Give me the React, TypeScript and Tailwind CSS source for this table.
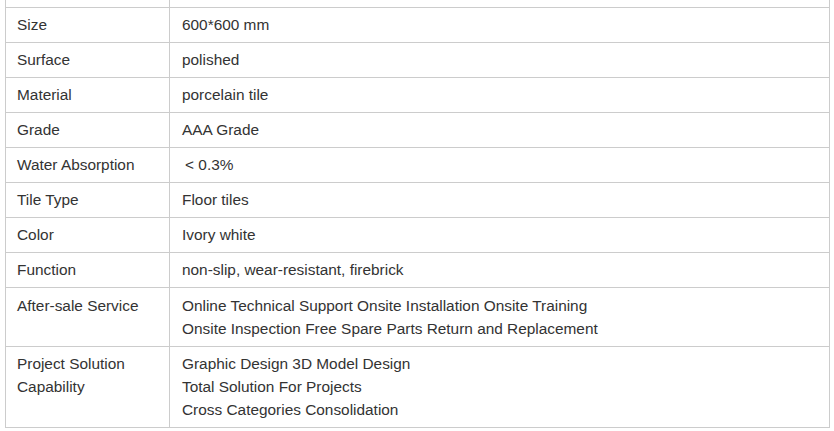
const one = "pt-[5px] pb-[6px]";

const rows: { label: string[]; value: string[]; pad: string }[] = [
  { label: ["Size"], value: ["600*600 mm"], pad: one },
  { label: ["Surface"], value: ["polished"], pad: one },
  { label: ["Material"], value: ["porcelain tile"], pad: one },
  { label: ["Grade"], value: ["AAA Grade"], pad: one },
  { label: ["Water Absorption"], value: ["\u2009< 0.3%"], pad: one },
  { label: ["Tile Type"], value: ["Floor tiles"], pad: one },
  { label: ["Color"], value: ["Ivory white"], pad: one },
  { label: ["Function"], value: ["non-slip, wear-resistant, firebrick"], pad: one },
  {
    label: ["After-sale Service"],
    value: [
      "Online Technical Support Onsite Installation Onsite Training",
      "Onsite Inspection Free Spare Parts Return and Replacement",
    ],
    pad: "pt-[6px] pb-[6px]",
  },
  {
    label: ["Project Solution", "Capability"],
    value: [
      "Graphic Design 3D Model Design",
      "Total Solution For Projects",
      "Cross Categories Consolidation",
    ],
    pad: "pt-[5px] pb-[6px]",
  },
];

export default function App() {
  return (
    <div className="w-[834px] h-[431px] bg-white overflow-hidden pl-[5px] pr-[4px] font-['Liberation_Sans',Arial,sans-serif] text-[15.4px] leading-[23px] text-[#333]">
      <table className="w-full border-collapse table-fixed">
        <colgroup>
          <col className="w-[164px]" />
          <col />
        </colgroup>
        <tbody>
          {/* tail of the row above, cut off by the crop */}
          <tr className="h-[7px]">
            <td className="border-x border-b border-[#cccccc] p-0" />
            <td className="border-x border-b border-[#cccccc] p-0" />
          </tr>
          {rows.map((r) => (
            <tr key={r.label.join(" ")}>
              <td className={"border border-[#cccccc] align-top pl-[11px] pr-2 " + r.pad}>
                {r.label.map((l) => (
                  <div key={l}>{l}</div>
                ))}
              </td>
              <td className={"border border-[#cccccc] align-top pl-[12px] pr-2 " + r.pad}>
                {r.value.map((v) => (
                  <div key={v}>{v}</div>
                ))}
              </td>
            </tr>
          ))}
        </tbody>
      </table>
    </div>
  );
}
